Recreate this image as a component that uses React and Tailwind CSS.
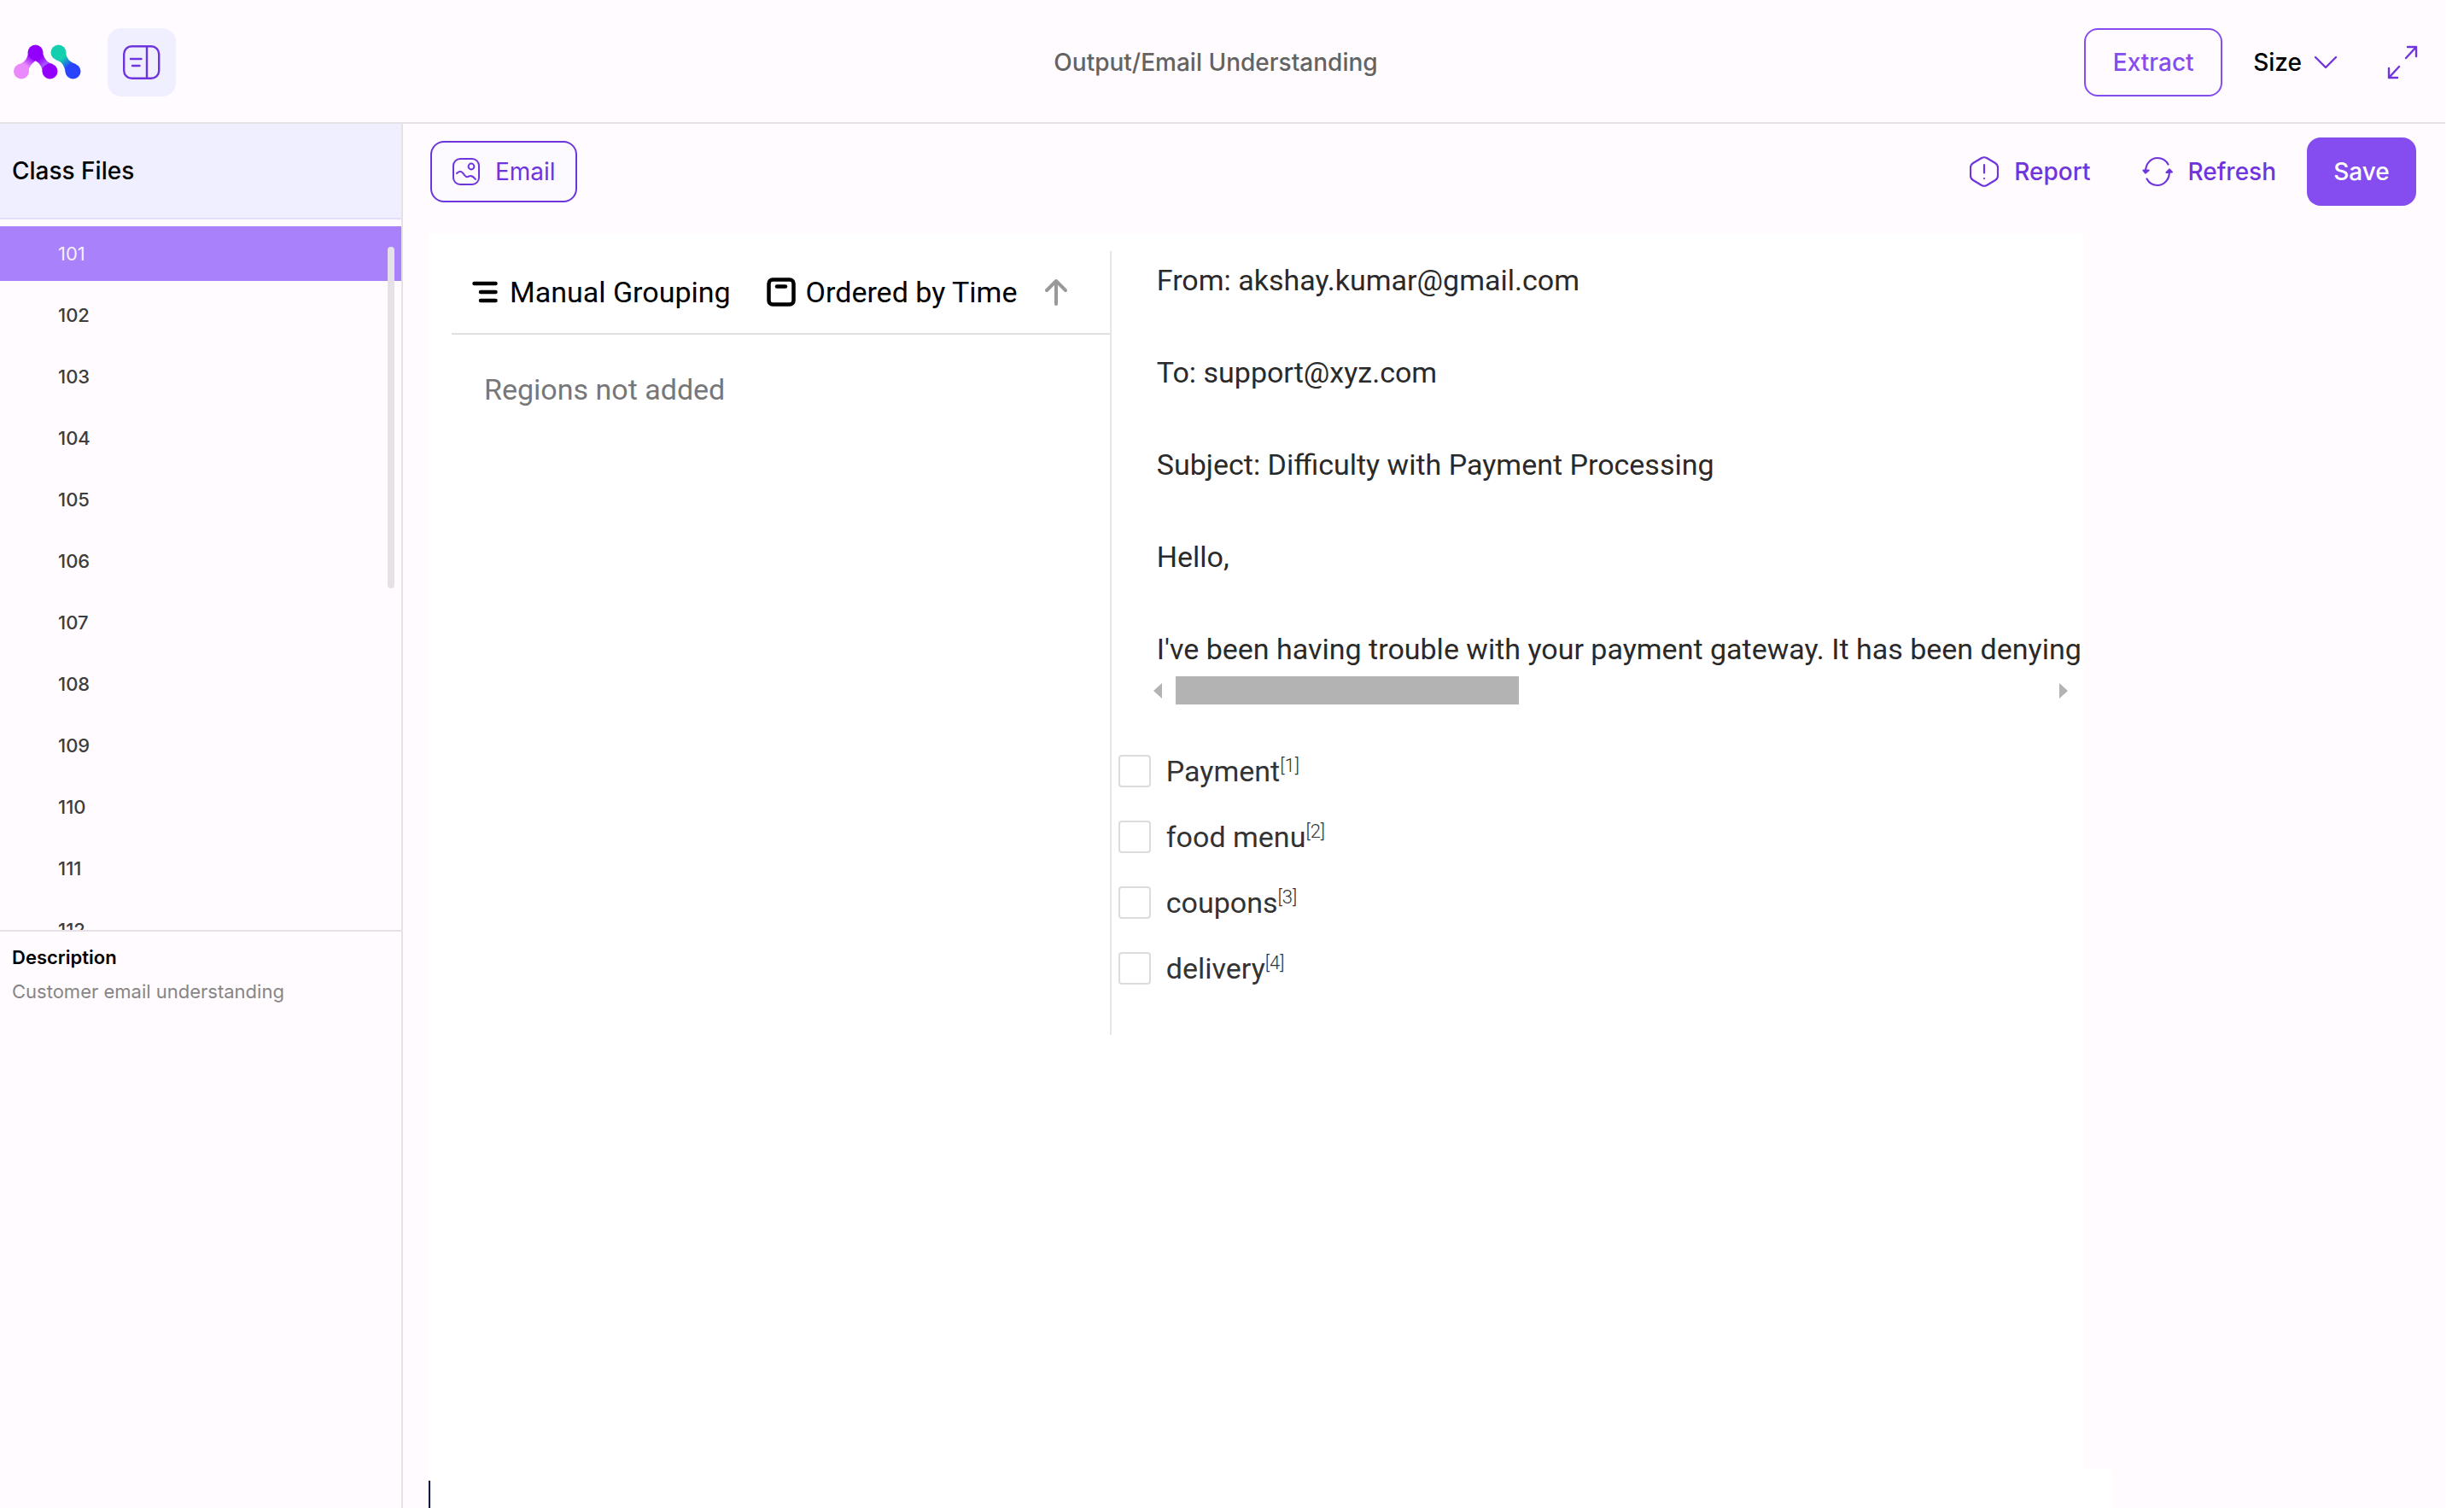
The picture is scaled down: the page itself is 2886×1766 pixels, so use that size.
import React from "react";

const files = ["101", "102", "103", "104", "105", "106", "107", "108", "109", "110", "111", "112"];
const mail = [
  "From: akshay.kumar@gmail.com",
  "To: support@xyz.com",
  "Subject: Difficulty with Payment Processing",
  "Hello,",
  "I've been having trouble with your payment gateway. It has been denying",
];
const labels = ["Payment", "food menu", "coupons", "delivery"];

function Logo() {
  return (
    <svg className="h-[42px] w-20" viewBox="0 0 80 42" aria-hidden="true">
      <defs>
        <linearGradient id="pink" x1="9" y1="31" x2="26" y2="9" gradientUnits="userSpaceOnUse">
          <stop offset="0.3" stopColor="#e989fb" />
          <stop offset="0.75" stopColor="#9200fc" />
        </linearGradient>
        <linearGradient id="violet" x1="26" y1="9" x2="43" y2="31" gradientUnits="userSpaceOnUse">
          <stop offset="0.3" stopColor="#9200fc" />
          <stop offset="0.65" stopColor="#a955fb" />
          <stop offset="0.8" stopColor="#9200fc" />
        </linearGradient>
        <linearGradient id="teal" x1="53" y1="9" x2="70" y2="31" gradientUnits="userSpaceOnUse">
          <stop offset="0.3" stopColor="#13cfae" />
          <stop offset="0.75" stopColor="#2944fc" />
        </linearGradient>
      </defs>
      <path d="M17 10C16 18 11 22 5 24L17 35C17 27 21 22 26 19L33 12Z" fill="url(#pink)" />
      <path d="M34 10C36 18 41 22 46 23L34 34C34 27 30 21 25 19L20 14Z" fill="url(#violet)" />
      <path d="M61 9C62 18 67 21 73 23L61 34C60 26 57 20 49 18Z" fill="url(#teal)" />
      <circle cx="9" cy="31.500" r="9" fill="#e989fb" />
      <circle cx="25.500" cy="9.500" r="9" fill="#9200fc" />
      <circle cx="42.500" cy="31.500" r="9" fill="#9200fc" />
      <circle cx="52.500" cy="9.500" r="9" fill="#13cfae" />
      <circle cx="69.500" cy="31.500" r="9" fill="#2944fc" />
    </svg>
  );
}

function Icon({ className, box = "0 0 44 44", width = 2.4, children }) {
  return (
    <svg className={className} viewBox={box} fill="none" stroke="currentColor" strokeWidth={width} strokeLinecap="round" strokeLinejoin="round" aria-hidden="true">
      {children}
    </svg>
  );
}

export default function App() {
  return (
    <div className="flex h-screen flex-col overflow-hidden bg-white pr-[22px] font-['Inter',sans-serif]">
      <div className="flex min-h-0 flex-1 flex-col bg-[#fffbff]">
        <header className="grid h-[145px] shrink-0 grid-cols-[1fr_auto_1fr] items-center border-b-2 border-[#e6e1e6] pt-[3px] pl-4 pr-8">
          <div className="flex items-center gap-[30px]">
            <Logo />
            <button aria-label="Toggle panel" className="grid size-20 place-items-center rounded-2xl bg-[#f0efff] text-[#6f35dc]">
              <Icon className="size-11">
                <rect x="1.200" y="3.200" width="41" height="37.500" rx="9" />
                <path d="M28 3.500V40.500M9 18H21.500M11 26H19.500" />
              </Icon>
            </button>
          </div>
          <h1 className="text-[28px] leading-9 font-medium text-[#636363]">Output/Email Understanding</h1>
          <div className="flex items-center justify-end font-medium">
            <button className="h-20 w-[162px] rounded-2xl border-2 border-[#854def] text-[28px] text-[#854def]">Extract</button>
            <button className="ml-[36px] flex items-center gap-[14px] text-[28px] text-black">
              Size
              <Icon className="h-4 w-7 text-[#6f35dc]" box="0 0 28 16">
                <path d="M2 2L14 14L26 2" />
              </Icon>
            </button>
            <button aria-label="Full screen" className="ml-[58px] text-[#6f35dc]">
              <Icon className="h-10 w-9" box="0 0 36 40">
                <path d="M22 15L34 2M24 2H34V13M14 25L2 38M2 27V38H12" />
              </Icon>
            </button>
          </div>
        </header>
        <div className="flex min-h-0 flex-1">
          <aside className="flex w-[472px] shrink-0 flex-col border-r-2 border-[#e6e1e6]">
            <h2 className="flex h-[112px] shrink-0 items-center border-b-2 border-[#e0e0fb] bg-[#f0efff] pl-[14px] text-[28px] font-medium text-black">Class Files</h2>
            <div className="relative h-[834px] shrink-0 overflow-hidden border-b-2 border-[#e6e1e6] pt-2">
              <ul className="flex flex-col gap-2">
                {files.map((f, i) => (
                  <li key={f}>
                    <button className={"flex h-16 w-full items-center pl-[68px] text-[22px] " + (i === 0 ? "bg-[#a982fb] text-[#f5eefa]" : "font-medium text-[#3d3d3d]")}>{f}</button>
                  </li>
                ))}
              </ul>
              <div className="absolute right-2 top-8 h-[400px] w-2 rounded-full bg-[#e6e1e6]" />
            </div>
            <section className="px-[14px] pt-[14px] text-[22px]">
              <h3 className="leading-8 font-semibold text-black">Description</h3>
              <p className="mt-2 leading-8 text-[#868686]">Customer email understanding</p>
            </section>
          </aside>
          <main className="flex min-w-0 flex-1 flex-col">
            <div className="flex h-[129px] shrink-0 items-start justify-between pl-8 pr-[34px] pt-4">
              <button className="mt-1 flex h-[72px] w-[172px] items-center gap-[18px] rounded-2xl border-2 border-[#6f35dc] bg-[#fcfaff] pl-6 text-[28px] text-[#6f35dc]">
                <Icon className="size-8" box="0 0 32 32" width={2}>
                  <rect x="1" y="1" width="30" height="30" rx="8" />
                  <circle cx="22" cy="10" r="3.400" />
                  <path d="M5 18C8 15 10 15 12.500 18C15 22 17 23 19 21.500C22 20 24 21 27 25" />
                </Icon>
                Email
              </button>
              <div className="flex items-center text-[28px] font-medium text-[#6f35dc]">
                <button className="flex items-center gap-[18px]">
                  <Icon className="h-9 w-[34px]" box="0 0 34 36" width={2.2}>
                    <path d="M14 2Q17 0.500 20 2L30 8Q33 10 33 13V23Q33 26 30 28L20 34Q17 35.500 14 34L4 28Q1 26 1 23V13Q1 10 4 8ZM17 10V19.500M17 26V26.100" />
                  </Icon>
                  Report
                </button>
                <button className="ml-[60px] flex items-center gap-[18px]">
                  <Icon className="size-9" box="0 0 36 36" width={2.2}>
                    <path d="M4 18C4 9 10 2 18 2C24 2 28 5 30.500 9.500M32 18C32 27 26 34 18 34C12 34 8 31 5.500 26.500" />
                    <path d="M1.500 16.500L4 19.500L7.500 16.500ZM28.500 19L32 15.500L34.800 18.500Z" fill="currentColor" />
                  </Icon>
                  Refresh
                </button>
                <button className="ml-[36px] h-20 w-32 rounded-2xl bg-[#854def] text-white">Save</button>
              </div>
            </div>
            <div className="ml-[30px] mr-[423px] flex min-h-0 flex-1 flex-col bg-white font-['Roboto',sans-serif]">
              <div className="flex h-[938px] pl-[27px] pt-5">
                <section className="min-w-0 flex-[772]">
                  <div className="flex h-[98px] items-center border-b-2 border-[#e0e0e0] pl-6 text-[34px] text-black">
                    <button className="flex items-center gap-[14px]">
                      <Icon className="h-[26px] w-[30px]" box="0 0 30 26" width={4.5}>
                        <path d="M2.500 3H27.500M10 13H27.500M10 23H27.500" />
                      </Icon>
                      Manual Grouping
                    </button>
                    <button className="ml-[42px] flex items-center gap-3">
                      <Icon className="size-[34px]" box="0 0 34 34" width={4.5}>
                        <rect x="2.500" y="2.500" width="29" height="29" rx="4.500" />
                        <path d="M12 10.500H22" />
                      </Icon>
                      Ordered by Time
                    </button>
                    <button aria-label="Sort ascending" className="ml-[32px] text-[#999]">
                      <Icon className="h-8 w-7" box="0 0 28 32" width={4}>
                        <path d="M14 30V4M3 14L14 3L25 14" />
                      </Icon>
                    </button>
                  </div>
                  <p className="mt-10 pl-[38px] text-[34px] leading-[48px] text-[#777]">Regions not added</p>
                </section>
                <section className="min-w-0 flex-[1141] border-l-2 border-[#e6e6e6]">
                  <div className="flex flex-col gap-[60px] overflow-hidden pl-[53px] pt-[10px] text-[34px] leading-[48px] whitespace-nowrap text-[#2a2a2a]">
                    {mail.map((m) => <p key={m}>{m}</p>)}
                  </div>
                  <div className="mt-2 flex h-[33px] items-center pl-[49px] pr-[19px] text-[#b3b3b3]">
                    <svg className="h-5 w-[10px]" viewBox="0 0 10 20" fill="currentColor" aria-hidden="true"><path d="M10 1V19L0 10Z" /></svg>
                    <div className="mx-4 h-full flex-1"><div className="h-full w-[402px] bg-[#b3b3b3]" /></div>
                    <svg className="h-5 w-[10px]" viewBox="0 0 10 20" fill="currentColor" aria-hidden="true"><path d="M0 1V19L10 10Z" /></svg>
                  </div>
                  <ul className="mt-[54px] flex flex-col gap-[29px] pl-2">
                    {labels.map((l, i) => (
                      <li key={l}>
                        <label className="flex h-12 items-center gap-[18px] text-[34px] text-[#333]">
                          <input type="checkbox" className="size-[38px] appearance-none rounded border-2 border-[#dcdcdc] bg-white" />
                          <span className="leading-[48px]">{l}<sup className="text-[22px] font-light">[{i + 1}]</sup></span>
                        </label>
                      </li>
                    ))}
                  </ul>
                </section>
              </div>
            </div>
            <div className="ml-[30px] mr-[390px] flex h-[45px] shrink-0 items-end bg-white">
              <div className="h-8 w-[2px] bg-[#00003a]" />
            </div>
          </main>
        </div>
      </div>
    </div>
  );
}
